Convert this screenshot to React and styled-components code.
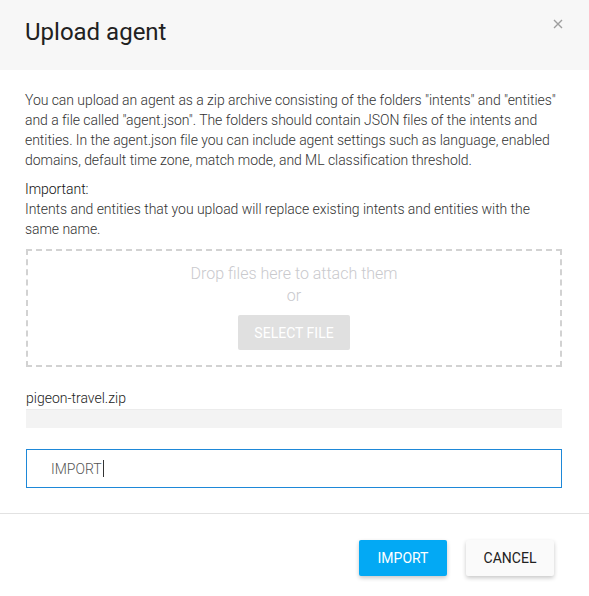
import React from 'react'
import styled, {createGlobalStyle} from 'styled-components'

const GlobalStyle = createGlobalStyle`
  html, body {
    margin: 0;
    padding: 0;
    background: #ffffff;
  }
  body {
    font-family: Roboto, "Liberation Sans", sans-serif;
    color: #333333;
  }
  * {
    box-sizing: border-box;
  }
`

const Dialog = styled.div`
  width: 589px;
  height: 596px;
  background: #ffffff;
  display: flex;
  flex-direction: column;
`

const Header = styled.div`
  height: 70px;
  background: #f7f7f7;
  display: flex;
  align-items: center;
  justify-content: space-between;
  padding: 0 25px 0 25px;
`

const Title = styled.h2`
  margin: 0 0 6px 0;
  font-size: 24px;
  font-weight: 400;
  color: #212121;
`

const Close = styled.button`
  border: none;
  background: none;
  padding: 0;
  margin: -23px 0 0 0;
  width: 12px;
  height: 12px;
  display: flex;
  align-items: center;
  justify-content: center;
  cursor: pointer;
`

const Body = styled.div`
  padding: 20px 27px 0 25px;
  display: flex;
  flex-direction: column;
`

const Para = styled.p`
  margin: 0;
  font-size: 14px;
  line-height: 20px;
  font-weight: 300;
  color: #333333;
  letter-spacing: -0.05px;
`

const Important = styled(Para)`
  margin-top: 9px;
  color: #111111;
`

const DropZone = styled.div`
  margin: 10px 0 0 1px;
  height: 118px;
  border: 2px dashed #d2d2d2;
  display: flex;
  flex-direction: column;
  align-items: center;
  padding-top: 12px;
`

const DropText = styled.div`
  font-size: 16px;
  line-height: 22px;
  font-weight: 300;
  color: #c9c9cd;
`

const SelectButton = styled.button`
  margin-top: 8px;
  width: 112px;
  height: 35px;
  border: none;
  border-radius: 2px;
  background: #e0e0e0;
  color: #ffffff;
  font-family: Roboto, "Liberation Sans", sans-serif;
  font-size: 14px;
  font-weight: 400;
  text-transform: uppercase;
`

const FileName = styled.div`
  margin: 22px 0 0 1px;
  font-size: 14px;
  line-height: 18px;
  font-weight: 300;
  color: #222222;
`

const Progress = styled.div`
  margin: 2px 0 0 1px;
  height: 19px;
  background: #f3f3f3;
  border-top: 1px solid #ececec;
`

const Input = styled.div`
  margin: 21px 0 0 1px;
  height: 39px;
  border: 1px solid #1e88d8;
  display: flex;
  align-items: center;
  padding-left: 24px;
  font-size: 14px;
  font-weight: 300;
  color: #555555;
`

const Caret = styled.span`
  display: inline-block;
  width: 1px;
  height: 17px;
  background: #333333;
  margin-left: 1px;
`

const Divider = styled.div`
  margin-top: 25px;
  height: 1px;
  background: #e2e2e2;
`

const Footer = styled.div`
  display: flex;
  justify-content: flex-end;
  gap: 19px;
  padding: 26px 35px 0 0;
`

const Button = styled.button`
  width: 88px;
  height: 36px;
  border: none;
  border-radius: 2px;
  font-family: Roboto, "Liberation Sans", sans-serif;
  font-size: 14px;
  font-weight: 400;
  text-transform: uppercase;
  background: ${p => (p.$primary ? '#03a9f4' : '#fafafa')};
  color: ${p => (p.$primary ? '#ffffff' : '#212121')};
  box-shadow: 0 2px 4px rgba(0, 0, 0, 0.22);
  cursor: pointer;
`

export default function App() {
  return (
    <>
      <GlobalStyle />
      <Dialog>
        <Header>
          <Title>Upload agent</Title>
          <Close aria-label="Close">
            <svg width="10" height="10" viewBox="0 0 10 10">
              <path d="M1 1 L9 9 M9 1 L1 9" stroke="#9e9e9e" strokeWidth="1.4" />
            </svg>
          </Close>
        </Header>
        <Body>
          <Para>
            You can upload an agent as a zip archive consisting of the folders "intents" and "entities"
            and a file called "agent.json". The folders should contain JSON files of the intents and
            entities. In the agent.json file you can include agent settings such as language, enabled
            domains, default time zone, match mode, and ML classification threshold.
          </Para>
          <Important>Important:</Important>
          <Para>
            Intents and entities that you upload will replace existing intents and entities with the
            same name.
          </Para>
          <DropZone>
            <DropText>Drop files here to attach them</DropText>
            <DropText>or</DropText>
            <SelectButton disabled>Select file</SelectButton>
          </DropZone>
          <FileName>pigeon-travel.zip</FileName>
          <Progress />
          <Input>
            IMPORT<Caret />
          </Input>
        </Body>
        <Divider />
        <Footer>
          <Button $primary>Import</Button>
          <Button>Cancel</Button>
        </Footer>
      </Dialog>
    </>
  )
}
